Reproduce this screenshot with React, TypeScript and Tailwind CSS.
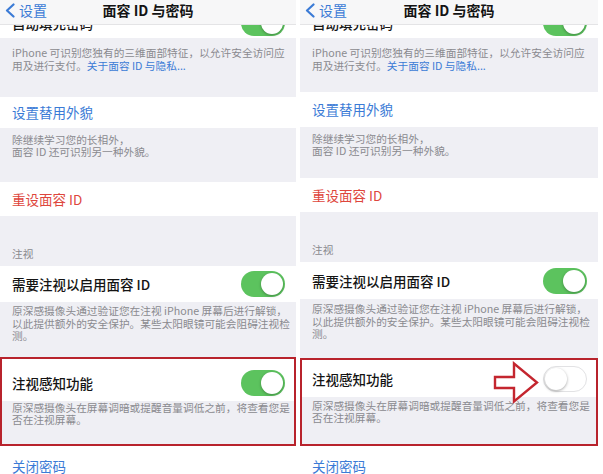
import React from "react";

type Side = "left" | "right";

function Toggle({ on }: { on: boolean }) {
  if (on) {
    return (
      <div className="w-[44px] h-[26px] rounded-full bg-[#5cc35e] flex items-center justify-end p-[2px] shrink-0">
        <div className="w-[22px] h-[22px] rounded-full bg-white shadow-[0_1px_3px_rgba(0,0,0,0.3)]" />
      </div>
    );
  }
  return (
    <div className="w-[44px] h-[26px] rounded-full bg-white border-[1.5px] border-[#e2e2e4] flex items-center justify-start p-[1px] shrink-0">
      <div className="w-[22px] h-[22px] rounded-full bg-white shadow-[0_1px_3px_rgba(0,0,0,0.35)]" />
    </div>
  );
}

const GRAY = "bg-[#efeff4] text-[10.7px] leading-[12.5px] text-[#8a8a8f] whitespace-nowrap";
const ROW = "bg-white flex items-center justify-between text-[13.5px] text-[#141414] whitespace-nowrap";

function Panel({ side }: { side: Side }) {
  const L = side === "left";
  const H = L
    ? {
        w: "w-[296px]",
        g1: "h-[59px]",
        r1: "h-[31px]",
        g2: "h-[54px]",
        r2: "h-[35px]",
        g3: "h-[50px]",
        r3: "h-[36px]",
        g4: "h-[55px] pt-[3px]",
        r4: "h-[42px] pt-[6px]",
        g5: "h-[43px] pt-[1px]",
      }
    : {
        w: "w-[298px]",
        g1: "h-[54px]",
        r1: "h-[35px]",
        g2: "h-[51px]",
        r2: "h-[35px]",
        g3: "h-[50px]",
        r3: "h-[37px]",
        g4: "h-[59px] pt-[4px]",
        r4: "h-[37px] pt-[2px]",
        g5: "h-[47px] pt-[3px]",
      };

  return (
    <div className={`relative flex flex-col bg-white h-[474px] overflow-hidden shrink-0 ${H.w}`}>
      {/* nav bar */}
      <div className="h-[25px] shrink-0 bg-[#f7f7f8] border-b border-[#e4e4e6] flex items-start">
        <div className="relative w-full h-[19px] flex items-center justify-center">
          <div className="absolute left-[5px] top-[2px] flex items-center gap-[4px] text-[#3b7bd6] text-[14px] leading-[16px]">
            <svg width="10" height="15" viewBox="0 0 10 15" fill="none">
              <path d="M8.5 1.5 L2 7.5 L8.5 13.5" stroke="#3b7bd6" strokeWidth="2.2" strokeLinecap="round" strokeLinejoin="round" />
            </svg>
            <span>设置</span>
          </div>
          <span className="font-bold text-[14px] leading-[16px] text-[#141414] mt-[1px]">面容 ID 与密码</span>
        </div>
      </div>

      {/* row scrolled mostly under the nav bar */}
      <div className="h-[13px] shrink-0 overflow-hidden bg-white">
        <div className={`${ROW} h-[38px] -mt-[25px] pt-[8px] pl-[12px] pr-[11px]`}>
          <span className="font-medium">自动填充密码</span>
          <Toggle on />
        </div>
      </div>

      <div className={`${GRAY} ${H.g1} pt-[9px] px-[12px]`}>
        <div>iPhone 可识别您独有的三维面部特征，以允许安全访问应</div>
        <div>
          用及进行支付。<span className="text-[#3b7bd6]">关于面容 ID 与隐私...</span>
        </div>
      </div>

      <div className={`${ROW} ${H.r1} px-[12px]`}>
        <span className="text-[#3b7bd6]">设置替用外貌</span>
      </div>

      <div className={`${GRAY} ${H.g2} pt-[6px] px-[12px]`}>
        <div>除继续学习您的长相外，</div>
        <div>面容 ID 还可识别另一种外貌。</div>
      </div>

      <div className={`${ROW} ${H.r2} px-[12px]`}>
        <span className="text-[#de463d]">重设面容 ID</span>
      </div>

      <div className={`${GRAY} ${H.g3} flex flex-col justify-end pb-[6px] px-[12px]`}>
        <div>注视</div>
      </div>

      <div className={`${ROW} ${H.r3} pl-[12px] pr-[11px]`}>
        <span className="font-medium">需要注视以启用面容 ID</span>
        <Toggle on />
      </div>

      <div className={`${GRAY} ${H.g4} px-[12px]`}>
        <div>原深感摄像头通过验证您在注视 iPhone 屏幕后进行解锁，</div>
        <div>以此提供额外的安全保护。某些太阳眼镜可能会阻碍注视检</div>
        <div>测。</div>
      </div>

      <div className="border-2 border-[#b8232c] flex flex-col shrink-0">
        <div className={`${ROW} ${H.r4} pl-[10px] pr-[9px]`}>
          <span className="font-medium">注视感知功能</span>
          <Toggle on={L} />
        </div>
        <div className={`${GRAY} ${H.g5} px-[10px]`}>
          <div>原深感摄像头在屏幕调暗或提醒音量调低之前，将查看您是</div>
          <div>否在注视屏幕。</div>
        </div>
      </div>

      <div className="flex-1 bg-white px-[12px] pt-[12px] text-[13.5px] leading-[16px] text-[#3b7bd6]">
        关闭密码
      </div>

      {!L && (
        <svg
          className="absolute left-[193px] top-[361px]"
          width="47"
          height="44"
          viewBox="0 0 47 44"
          fill="none"
        >
          <path
            d="M2 16 L21 16 L21 2.5 L44 21.5 L21 40.5 L21 27 L2 27 Z"
            fill="#ffffff"
            stroke="#c4262f"
            strokeWidth="2.4"
            strokeLinejoin="miter"
          />
        </svg>
      )}
    </div>
  );
}

export default function App() {
  return (
    <div className="w-[603px] h-[474px] bg-white flex overflow-hidden font-['Noto_Sans_CJK_SC',sans-serif]">
      <Panel side="left" />
      <div className="w-[4px] shrink-0" />
      <Panel side="right" />
    </div>
  );
}
